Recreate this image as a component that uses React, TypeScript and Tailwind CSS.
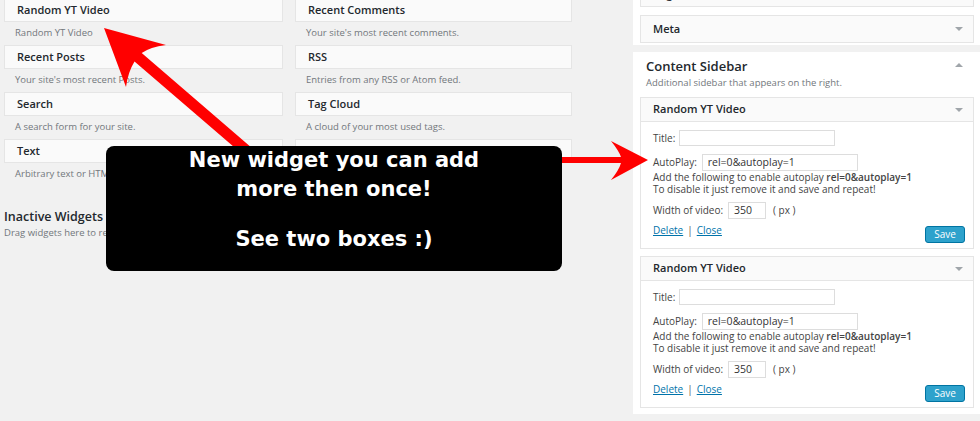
import React from 'react';

const font = { fontFamily: '"Open Sans", "Liberation Sans", sans-serif' };

interface AvailableWidget {
  title: string;
  desc: string;
}

const colOne: AvailableWidget[] = [
  { title: 'Random YT Video', desc: 'Random YT Video' },
  { title: 'Recent Posts', desc: "Your site's most recent Posts." },
  { title: 'Search', desc: 'A search form for your site.' },
  { title: 'Text', desc: 'Arbitrary text or HTML.' },
];

// last tile sits under the annotation box, only its top edge shows
const colTwo: AvailableWidget[] = [
  { title: 'Recent Comments', desc: "Your site's most recent comments." },
  { title: 'RSS', desc: 'Entries from any RSS or Atom feed.' },
  { title: 'Tag Cloud', desc: 'A cloud of your most used tags.' },
  { title: '', desc: '' },
];

const WidgetTile: React.FC<{ item: AvailableWidget }> = ({ item }) => (
  <div>
    <div className="h-[24px] border border-[#e5e5e5] bg-[#fafafa] flex items-center px-[12px] text-[11px] font-semibold text-[#23282d]">
      {item.title}
    </div>
    <div className="h-[23px] flex items-center px-[11px] text-[9.5px] text-[#72777c]">{item.desc}</div>
  </div>
);

const Caret: React.FC<{ up?: boolean }> = ({ up }) => (
  <span
    className={
      up
        ? 'block w-0 h-0 border-l-[4px] border-r-[4px] border-b-[4px] border-l-transparent border-r-transparent border-b-[#a0a5aa]'
        : 'block w-0 h-0 border-l-[4px] border-r-[4px] border-t-[4px] border-l-transparent border-r-transparent border-t-[#a0a5aa]'
    }
  />
);

const YTVideoWidget: React.FC = () => (
  <div className="border border-[#e5e5e5] bg-white">
    <div className="h-[24px] border-b border-[#e5e5e5] bg-[#fafafa] flex items-center justify-between pl-[12px] pr-[10px]">
      <span className="text-[11px] font-semibold text-[#23282d]">Random YT Video</span>
      <Caret />
    </div>
    <div className="pl-[12px] pr-[8px] pt-[8px] pb-[5px] text-[10px] text-[#444]">
      <div className="h-[16px] flex items-center">
        <span className="mr-[4px]">Title:</span>
        <span className="w-[156px] h-[16px] border border-[#ddd] bg-white" />
      </div>
      <div className="mt-[8px] h-[17px] flex items-center">
        <span className="mr-[5px]">AutoPlay:</span>
        <span className="w-[156px] h-[17px] border border-[#ddd] bg-white flex items-center px-[5px] text-[10.5px] text-[#333]">
          rel=0&amp;autoplay=1
        </span>
      </div>
      <div className="leading-[12px]">
        Add the following to enable autoplay <b className="font-semibold">rel=0&amp;autoplay=1</b>
      </div>
      <div className="leading-[12px]">To disable it just remove it and save and repeat!</div>
      <div className="mt-[7px] h-[17px] flex items-center">
        <span className="mr-[5px]">Width of video:</span>
        <span className="w-[38px] h-[17px] border border-[#ddd] bg-white flex items-center px-[5px] text-[10.5px] text-[#333]">
          350
        </span>
        <span className="ml-[7px]">( px )</span>
      </div>
      <div className="mt-[5px] flex justify-between items-start">
        <div className="leading-[12px]">
          <span className="text-[#0073aa] underline">Delete</span>
          <span className="mx-[4px] text-[#555]">|</span>
          <span className="text-[#0073aa] underline">Close</span>
        </div>
        <div className="mt-[2px] w-[40px] h-[17px] bg-[#2ea2cc] border border-[#0074a2] rounded-[3px] flex items-center justify-center text-white text-[10px]">
          Save
        </div>
      </div>
    </div>
  </div>
);

const App: React.FC = () => {
  return (
    <div className="relative w-[980px] h-[421px] overflow-hidden bg-[#f1f1f1]" style={font}>
      <div className="flex">
        {/* Available widgets */}
        <div className="w-[633px] shrink-0 pl-[4px] mt-[-2px]">
          <div className="grid grid-cols-[279px_277px] gap-x-[12px]">
            <div>
              {colOne.map((w) => (
                <WidgetTile key={w.title} item={w} />
              ))}
            </div>
            <div>
              {colTwo.map((w, i) => (
                <WidgetTile key={i} item={w} />
              ))}
            </div>
          </div>
          <div className="mt-[22px] h-[18px] flex items-center text-[12.5px] font-semibold text-[#23282d]">
            Inactive Widgets
          </div>
          <div className="h-[14px] flex items-center text-[9.5px] text-[#72777c]">
            Drag widgets here to remove them from the sidebar but keep their settings.
          </div>
        </div>

        {/* Sidebars */}
        <div className="w-[348px] shrink-0">
          <div className="bg-white px-[7px] pb-[2px]">
            <div className="h-[26px] mt-[-19px] border border-[#e5e5e5] bg-[#fafafa] flex items-center px-[12px] text-[11px] font-semibold text-[#23282d]">
              Pages
            </div>
            <div className="mt-[8px] h-[28px] border border-[#e5e5e5] bg-[#fafafa] flex items-center justify-between pl-[12px] pr-[10px]">
              <span className="text-[11px] font-semibold text-[#23282d]">Meta</span>
              <Caret />
            </div>
          </div>

          <div className="mt-[7px] bg-white px-[7px] pt-[6px] pb-[6px]">
            <div className="h-[18px] flex items-center justify-between pl-[6px] pr-[11px]">
              <span className="text-[13px] font-semibold text-[#23282d]">Content Sidebar</span>
              <div className="flex mb-[5px]">
                <Caret up />
              </div>
            </div>
            <div className="h-[14px] flex items-center pl-[6px] text-[9.5px] text-[#72777c]">
              Additional sidebar that appears on the right.
            </div>
            <div className="mt-[7px] flex flex-col gap-[7px]">
              <YTVideoWidget />
              <YTVideoWidget />
            </div>
          </div>
        </div>
      </div>

      {/* Annotation overlay */}
      <svg className="absolute left-0 top-0" width="980" height="421" viewBox="0 0 980 421">
        <path
          d="M104,28 L166,45 Q150,47 141.7,53.1 L259.2,154.2 L252,162.6 L134.5,61.5 Q128,72 126,87 Z"
          fill="#ff0000"
        />
        <path d="M648,160 L611,141 Q619,151 621,157 L555,157 L555,163 L621,163 Q619,170 611,180 Z" fill="#ff0000" />
      </svg>
      <div
        className="absolute left-[106px] top-[146px] w-[456px] h-[125px] rounded-[8px] bg-black text-white text-center font-bold text-[21px] leading-[29px]"
        style={{ fontFamily: '"DejaVu Sans", Verdana, sans-serif' }}
      >
        <div>New widget you can add</div>
        <div>more then once!</div>
        <div className="mt-[21px]">See two boxes :)</div>
      </div>
    </div>
  );
};

export default App;
